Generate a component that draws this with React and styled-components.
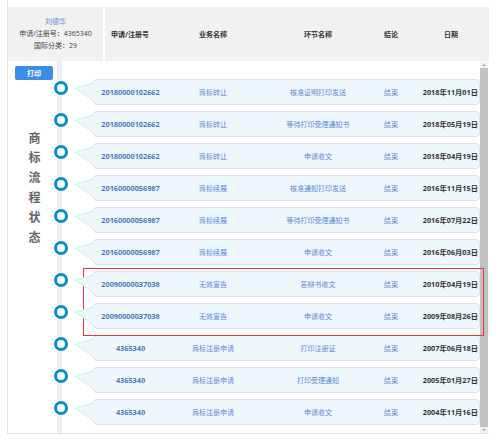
import React from 'react';
import styled, { createGlobalStyle } from 'styled-components';

const GlobalStyle = createGlobalStyle`
  body {
    margin: 0;
    background: #fff;
    font-family: "Open Sans", "Noto Sans CJK SC", sans-serif;
  }
`;

const records = [
  ['20180000102662', '商标转让', '核准证明打印发送', '结束', '2018年11月01日'],
  ['20180000102662', '商标转让', '等待打印受理通知书', '结束', '2018年05月19日'],
  ['20180000102662', '商标转让', '申请收文', '结束', '2018年04月19日'],
  ['20160000056987', '商标续展', '核准通知打印发送', '结束', '2016年11月15日'],
  ['20160000056987', '商标续展', '等待打印受理通知书', '结束', '2016年07月22日'],
  ['20160000056987', '商标续展', '申请收文', '结束', '2016年06月03日'],
  ['20090000037038', '无效宣告', '答辩书收文', '结束', '2010年04月19日'],
  ['20090000037038', '无效宣告', '申请收文', '结束', '2009年08月26日'],
  ['4365340', '商标注册申请', '打印注册证', '结束', '2007年06月18日'],
  ['4365340', '商标注册申请', '打印受理通知', '结束', '2005年01月27日'],
  ['4365340', '商标注册申请', '申请收文', '结束', '2004年11月16日'],
];

const Frame = styled.div`
  margin-left: 7px;
  width: 482px;
  height: 434px;
  padding-top: 7px;
  box-sizing: border-box;
  border-left: 1px solid #e2e2e2;
  border-bottom: 1px solid #e2e2e2;
  display: flex;
  flex-direction: column;
`;

const Header = styled.div`
  display: grid;
  grid-template-columns: 95px 1fr;
  column-gap: 2px;
  height: 54px;
  background: #fff;
`;

const OwnerCell = styled.div`
  background: #f1f1f1;
  display: flex;
  flex-direction: column;
  align-items: center;
  justify-content: center;
  font-size: 7px;
  line-height: 12px;
  color: #444;
`;

const OwnerName = styled.span`
  color: #6b8fd4;
`;

const HeadCells = styled.div`
  background: #f1f1f1;
  display: grid;
  grid-template-columns: 50px 116px 94px 52px 68px;
  align-items: center;
  font-size: 7px;
  font-weight: bold;
  color: #333;
`;

const HeadCell = styled.div`
  text-align: center;
`;

const Body = styled.div`
  flex: 1;
  display: flex;
  min-height: 0;
`;

const Side = styled.div`
  width: 46px;
  display: flex;
  flex-direction: column;
  align-items: flex-start;
`;

const PrintButton = styled.button`
  margin: 5px 0 0 7px;
  width: 38px;
  height: 14px;
  padding: 0;
  border: none;
  border-radius: 2px;
  background: #3a8ee6;
  color: #fff;
  font-family: inherit;
  font-size: 7px;
  font-weight: bold;
`;

const StatusLabel = styled.div`
  margin: 52px 0 0 18px;
  writing-mode: vertical-lr;
  font-family: "Noto Sans CJK SC", sans-serif;
  font-size: 12px;
  font-weight: bold;
  letter-spacing: 7.8px;
  color: #666;
`;

const Track = styled.div`
  flex: 1;
  display: flex;
  flex-direction: column;
  gap: 6px;
  padding-top: 18px;
  background: linear-gradient(
    to right,
    transparent 3px,
    #eeeeee 3px,
    #eeeeee 8px,
    transparent 8px
  );
`;

const Highlight = styled.div`
  position: relative;
  display: flex;
  flex-direction: column;
  gap: 6px;

  &::after {
    content: '';
    position: absolute;
    top: -3px;
    bottom: -7px;
    left: 29px;
    right: -4px;
    border: 1.5px solid #e8343a;
    pointer-events: none;
  }
`;

const Row = styled.div`
  display: flex;
  align-items: flex-start;
  height: 26px;
`;

const Dot = styled.span`
  flex: none;
  box-sizing: border-box;
  width: 14px;
  height: 14px;
  margin-top: 2px;
  border: 3px solid #0d8bc9;
  border-radius: 50%;
  background: #fff;
`;

const Tail = styled.svg`
  flex: none;
  margin-left: 7px;
  margin-right: -1px;
  position: relative;
  z-index: 1;
`;

const Bubble = styled.div`
  flex: 1;
  height: 26px;
  box-sizing: border-box;
  background: #eef7fc;
  border: 1px solid #d8e5ed;
  border-radius: 4px;
  display: grid;
  grid-template-columns: 73px 92px 118px 28px 1fr;
  align-items: center;
  font-size: 7px;
  color: #5b89d6;
`;

const Cell = styled.div`
  text-align: ${(p) => p.$align || 'center'};
  padding-right: ${(p) => (p.$align === 'right' ? '1px' : '0')};
  white-space: nowrap;
  font-size: ${(p) => p.$size || '7px'};
  font-weight: ${(p) => (p.$bold ? 'bold' : 'normal')};
  color: ${(p) => p.$color || 'inherit'};
`;

const Scrollbar = styled.div`
  flex: none;
  width: 8px;
  margin: 1px 1px 0 0;
  background: #f1f1f1;
  display: flex;
  flex-direction: column;
  align-items: center;
`;

const Arrow = styled.span`
  flex: none;
  width: 0;
  height: 0;
  margin: 2px 0;
  border-left: 2px solid transparent;
  border-right: 2px solid transparent;
  ${(p) => (p.$down ? 'border-top: 2px solid #a8a8a8;' : 'border-bottom: 2px solid #a8a8a8;')}
`;

const Thumb = styled.div`
  flex: 1;
  width: 8px;
  background: #c1c1c1;
`;

function TimelineRow({ item }) {
  const [no, biz, step, result, date] = item;
  return (
    <Row>
      <Dot />
      <Tail width="19" height="26" viewBox="0 0 19 26">
        <polygon points="0,9 19,4 19,22" fill="#eef7fc" stroke="#d8e5ed" strokeWidth="1" />
        <rect x="18" y="4.5" width="1" height="17" fill="#eef7fc" />
      </Tail>
      <Bubble>
        <Cell $size="7.3px" $bold $color="#4a78c9">{no}</Cell>
        <Cell>{biz}</Cell>
        <Cell>{step}</Cell>
        <Cell>{result}</Cell>
        <Cell $align="right" $size="7.3px" $bold $color="#333">{date}</Cell>
      </Bubble>
    </Row>
  );
}

export default function App() {
  const before = records.slice(0, 6);
  const marked = records.slice(6, 8);
  const after = records.slice(8);

  return (
    <>
      <GlobalStyle />
      <Frame>
        <Header>
          <OwnerCell>
            <OwnerName>刘德华</OwnerName>
            <span>申请/注册号：4365340</span>
            <span>国际分类：29</span>
          </OwnerCell>
          <HeadCells>
            <HeadCell>申请/注册号</HeadCell>
            <HeadCell>业务名称</HeadCell>
            <HeadCell>环节名称</HeadCell>
            <HeadCell>结论</HeadCell>
            <HeadCell>日期</HeadCell>
          </HeadCells>
        </Header>
        <Body>
          <Side>
            <PrintButton>打印</PrintButton>
            <StatusLabel>商标流程状态</StatusLabel>
          </Side>
          <Track>
            {before.map((item, i) => (
              <TimelineRow key={`a_${i}`} item={item} />
            ))}
            <Highlight>
              {marked.map((item, i) => (
                <TimelineRow key={`b_${i}`} item={item} />
              ))}
            </Highlight>
            {after.map((item, i) => (
              <TimelineRow key={`c_${i}`} item={item} />
            ))}
          </Track>
          <Scrollbar>
            <Arrow />
            <Thumb />
            <Arrow $down />
          </Scrollbar>
        </Body>
      </Frame>
    </>
  );
}
